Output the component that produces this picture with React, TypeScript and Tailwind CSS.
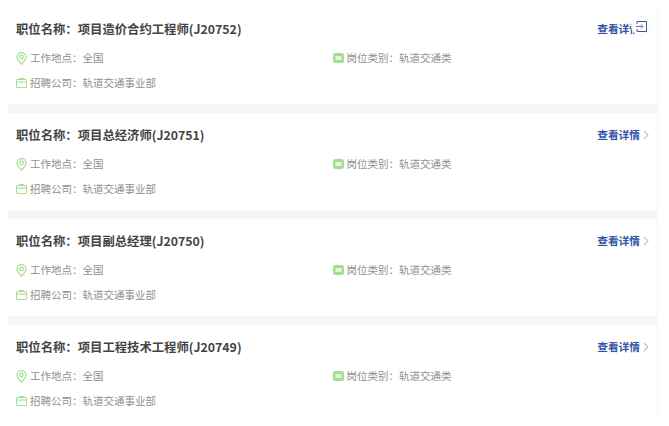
const jobs = [
  "项目造价合约工程师(J20752)",
  "项目总经济师(J20751)",
  "项目副总经理(J20750)",
  "项目工程技术工程师(J20749)",
];

const Pin = () => (
  <svg width="11" height="13" viewBox="0 0 11 13" fill="none" stroke="#a5dd92" strokeWidth="1.2" className="shrink-0">
    <path d="M5.5 12.2C3 9.6 1 7.6 1 5.1a4.5 4.5 0 0 1 9 0c0 2.5-2 4.5-4.5 7.1z" />
    <circle cx="5.5" cy="5" r="1.8" />
  </svg>
);

const Case = () => (
  <svg width="11" height="10" viewBox="0 0 11 10" fill="none" stroke="#a5dd92" strokeWidth="1" className="shrink-0">
    <rect x="0.5" y="1.5" width="10" height="8" rx="0.5" />
    <path d="M0.5 4h10M5.5 3.5v1.5M3.5 1.5V0.5h4v1" />
  </svg>
);

const Folder = () => (
  <svg width="11" height="10" viewBox="0 0 11 10" className="shrink-0">
    <rect width="11" height="10" rx="2.5" fill="#a5dd92" />
    <rect x="2.5" y="3" width="6" height="4" fill="#e4f5dd" />
  </svg>
);

const Meta = ({ icon, text }: { icon: React.ReactNode; text: string }) => (
  <div className="flex items-center h-[14px] gap-[3px] text-[10.5px] text-[#8f8f8f]">
    <span className="w-[11px] flex justify-center">{icon}</span>
    <span>{text}</span>
  </div>
);

export default function App() {
  return (
    <div className="w-[669px] h-[426px] bg-white overflow-hidden relative font-['Noto_Sans_CJK_SC','Noto_Sans',sans-serif]">
      <div className="ml-2 mt-[7px] w-[650px] h-[412px] bg-[#f6f6f8] flex flex-col gap-[9px]">
        {jobs.map((j) => (
          <div key={j} className="bg-white h-[97px] mr-[1px] pl-2 pr-[8px] pt-[13px] shrink-0">
            <div className="flex items-center justify-between h-[18px]">
              <div className="text-[12.35px] font-bold text-[#444444] leading-[18px]">职位名称：{j}</div>
              <div className="flex items-center gap-[3px] text-[10.7px] font-bold text-[#3355a8]">
                <span>查看详情</span>
                <svg width="6" height="10" viewBox="0 0 6 10" fill="none" stroke="#b4bfdc" strokeWidth="1.1">
                  <path d="M1 1l4 4-4 4" />
                </svg>
              </div>
            </div>
            <div className="grid grid-cols-2 mt-[13px]">
              <Meta icon={<Pin />} text="工作地点：全国" />
              <Meta icon={<Folder />} text="岗位类别：轨道交通类" />
            </div>
            <div className="mt-[11px]">
              <Meta icon={<Case />} text="招聘公司：轨道交通事业部" />
            </div>
          </div>
        ))}
      </div>
      <div className="absolute left-[631px] top-[16px] w-[20px] h-[20px] rounded-full bg-white border border-[#f3f3f5] flex items-center justify-center">
        <svg width="11" height="11" viewBox="0 0 11 11" fill="none" stroke="#3f5596" strokeWidth="1">
          <path d="M1 0.5h9.5v10H1V8M1 3V0.5" />
          <path d="M0 5.5h6.5" stroke="#6d7aa5" />
          <path d="M5 3.5l2 2-2 2" stroke="#6d7aa5" />
        </svg>
      </div>
    </div>
  );
}
